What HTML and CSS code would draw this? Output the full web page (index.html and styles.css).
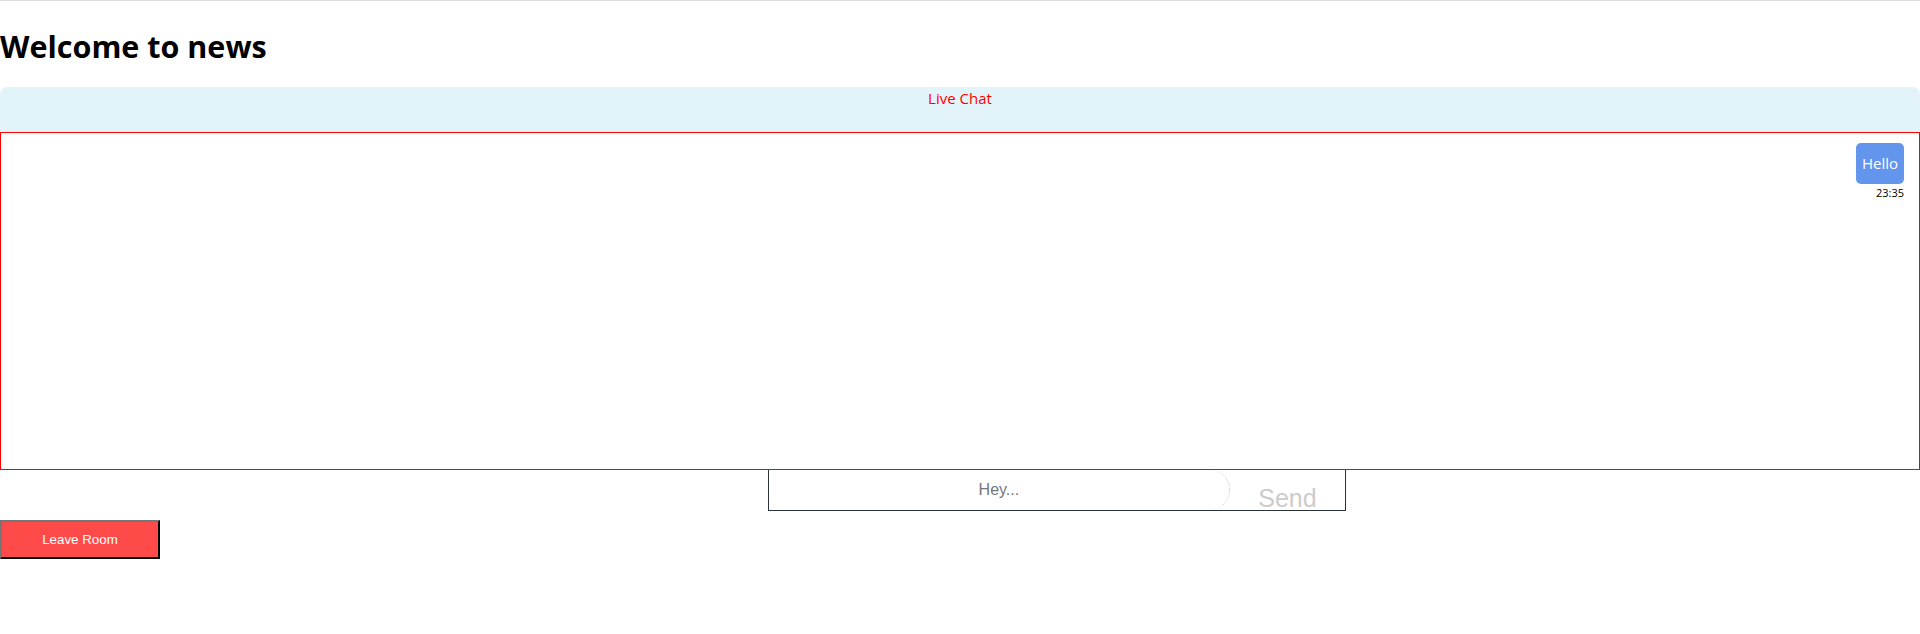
FILE: index.html
```html
<!DOCTYPE html>
<html>
<head>
<meta charset="utf-8">
<title>Chat</title>
<link rel="stylesheet" href="styles.css">
</head>
<body>
<div class="page">
  <h1 class="title">Welcome to news</h1>
  <div class="chat-header">Live Chat</div>
  <div class="chat-body">
    <div class="message mine">
      <div class="bubble">Hello</div>
      <div class="time">23:35</div>
    </div>
  </div>
  <form class="chat-form">
    <input class="chat-input" type="text" placeholder="Hey...">
    <button class="send-btn" type="button">Send</button>
  </form>
  <button class="leave-btn" type="button">Leave Room</button>
</div>
</body>
</html>
```

FILE: styles.css
```css
html, body {
  margin: 0;
  padding: 0;
  background: #ffffff;
}
body {
  border-top: 1px solid #dcdcdc;
  font-family: "Open Sans", "Noto Sans", sans-serif;
}
.title {
  margin: 0;
  padding-top: 23px;
  height: 63px;
  font-size: 30.5px;
  line-height: 44px;
  font-weight: 700;
  color: #000;
  box-sizing: content-box;
}
.chat-header {
  height: 45px;
  background: #e2f4f9;
  border-radius: 8px 8px 0 0;
  color: #ff0000;
  text-align: center;
  font-size: 15px;
  line-height: 22px;
}
.chat-body {
  border: 1px solid #ff0000;
  display: flex;
  flex-direction: column;
  align-items: flex-end;
  padding: 10px 15px 0 0;
  box-sizing: content-box;
  height: 326px;
}
.message {
  display: flex;
  flex-direction: column;
  align-items: flex-end;
}
.bubble {
  background: #6495ed;
  color: #fff;
  border-radius: 5px;
  padding: 10px 6px;
  font-size: 15px;
  line-height: 21px;
}
.time {
  font-size: 11px;
  font-weight: 400;
  line-height: 13px;
  margin-top: 2px;
  color: #000;
}
.chat-form {
  margin: 0 0 0 40%;
  width: 30%;
  height: 40px;
  display: flex;
  border: 1px solid #2c3338;
  border-top: none;
}
.chat-input {
  width: 80%;
  height: 40px;
  box-sizing: border-box;
  margin: 0;
  border: none;
  border-right: 1px dotted #b8c4cc;
  border-radius: 0 20px 20px 0;
  text-align: center;
  font-family: "Liberation Sans", Arial, sans-serif;
  font-size: 16px;
  outline: none;
  padding: 0;
}
.chat-input::placeholder {
  color: #757575;
}
.send-btn {
  flex: 1;
  height: 40px;
  box-sizing: border-box;
  background: none;
  border: none;
  color: #cccccc;
  font-family: "Liberation Sans", Arial, sans-serif;
  font-size: 25px;
  padding: 16px 0 0 0;
  line-height: 24px;
  text-align: center;
}
.leave-btn {
  display: block;
  margin-top: 9px;
  width: 160px;
  height: 39px;
  background: #ff4a4a;
  color: #fff;
  border: 2px outset #767676;
  border-right-color: #222;
  border-bottom-color: #222;
  font-family: "Liberation Sans", Arial, sans-serif;
  font-size: 13.333px;
  padding: 0;
}
```
